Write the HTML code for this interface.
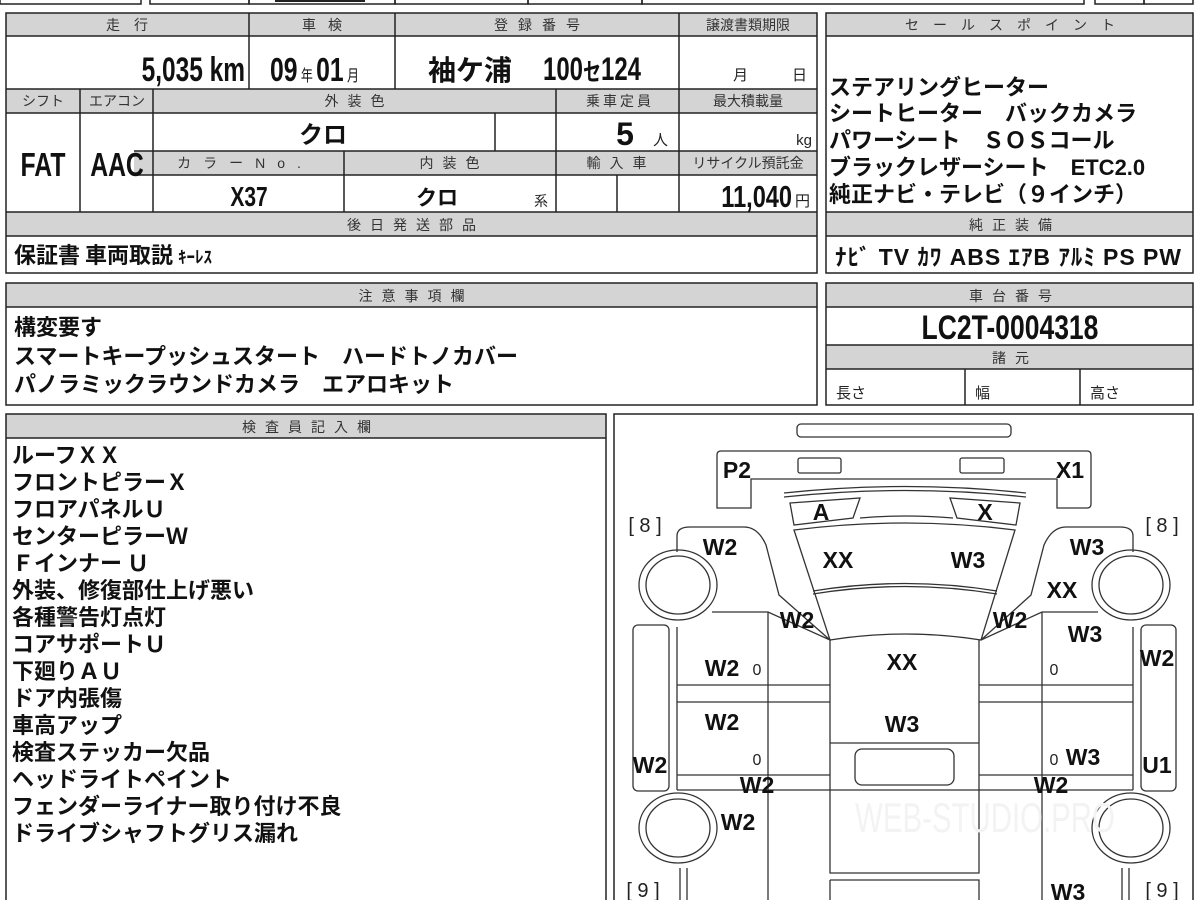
<!DOCTYPE html>
<html><head><meta charset="utf-8"><style>
html,body{margin:0;padding:0;background:#fff;width:1200px;height:900px;overflow:hidden}
svg{display:block}
.h{font-family:"Liberation Sans","Noto Sans CJK JP",sans-serif;font-size:14px;fill:#333;text-anchor:middle;letter-spacing:9px}
.hs{font-family:"Liberation Sans","Noto Sans CJK JP",sans-serif;font-size:14px;fill:#333;text-anchor:middle}
.b{font-family:"Liberation Sans","Noto Sans CJK JP",sans-serif;font-weight:bold;fill:#111}
.j{font-family:"Noto Sans CJK JP",sans-serif;font-weight:bold;fill:#111;font-size:22px}
.d{font-family:"Liberation Sans",sans-serif;font-weight:bold;font-size:23px;fill:#111;text-anchor:middle}
</style></head><body>
<svg width="1200" height="900" viewBox="0 0 1200 900" xmlns="http://www.w3.org/2000/svg">
<g fill="none" stroke="#222" stroke-width="1.5">
<rect x="0" y="-20" width="141" height="24"/><rect x="150" y="-20" width="99" height="24"/><rect x="249" y="-20" width="146" height="24"/><rect x="395" y="-20" width="133" height="24"/><rect x="528" y="-20" width="114" height="24"/><rect x="642" y="-20" width="442" height="24"/><rect x="1095" y="-20" width="49" height="24"/><rect x="1144" y="-20" width="49" height="24"/>
</g>
<rect x="275" y="0" width="90" height="2" fill="#222"/>
<g fill="#d4d4d4">
<rect x="6" y="13" width="811" height="23"/><rect x="6" y="89" width="811" height="24"/><rect x="134" y="151" width="683" height="24"/><rect x="6" y="212" width="811" height="24"/>
<rect x="826" y="13" width="367" height="23"/><rect x="826" y="212" width="367" height="24"/>
<rect x="6" y="283" width="811" height="24"/><rect x="826" y="283" width="367" height="24"/><rect x="826" y="345" width="367" height="24"/>
<rect x="6" y="414" width="600" height="24"/>
</g>
<g fill="none" stroke="#222" stroke-width="1.5">
<rect x="6" y="13" width="811" height="260"/>
<path d="M6 36H817M6 89H817M6 113H817M134 151H817M134 175H817M6 212H817M6 236H817"/>
<path d="M249 13V89M395 13V89M679 13V212M80 89V212M153 89V212M556 89V212M495 113V151M344 151V212M617 175V212"/>
<rect x="826" y="13" width="367" height="260"/>
<path d="M826 36H1193M826 212H1193M826 236H1193"/>
<rect x="6" y="283" width="811" height="122"/><path d="M6 307H817"/>
<rect x="826" y="283" width="367" height="122"/><path d="M826 307H1193M826 345H1193M826 369H1193M965 369V405M1080 369V405"/>
<rect x="6" y="414" width="600" height="500"/><path d="M6 438H606"/>
<rect x="614" y="414" width="579" height="500"/>
</g>
<!-- headers -->
<text class="h" x="134" y="30" style="letter-spacing:14px">走行</text><text class="h" x="328" y="30" style="letter-spacing:12px">車検</text><text class="h" x="542" y="30" style="letter-spacing:10px">登録番号</text><text class="hs" x="748" y="30">譲渡書類期限</text>
<text class="hs" x="43" y="106">シフト</text><text class="hs" x="117" y="106">エアコン</text><text class="h" x="359" y="106">外装色</text><text class="h" x="620" y="106" style="letter-spacing:3px">乗車定員</text><text class="hs" x="748" y="106">最大積載量</text>
<text class="h" x="245" y="168" style="letter-spacing:12px">カラーNo.</text><text class="h" x="454" y="168">内装色</text><text class="h" x="621" y="168">輸入車</text><text class="hs" x="748" y="168">リサイクル預託金</text>
<text class="h" x="416" y="230">後日発送部品</text>
<text class="h" x="1017" y="30" style="letter-spacing:14px">セールスポイント</text><text class="h" x="1015" y="230">純正装備</text>
<text class="h" x="416" y="301">注意事項欄</text><text class="h" x="1015" y="301">車台番号</text><text class="h" x="1015" y="363">諸元</text>
<text class="h" x="311" y="432">検査員記入欄</text>
<!-- values -->
<text class="b" x="245" y="81" font-size="34" text-anchor="end" transform="translate(245 0) scale(0.72 1) translate(-245 0)">5,035 km</text>
<text class="b" x="270" y="81" font-size="33" transform="translate(270 0) scale(0.75 1) translate(-270 0)">09<tspan font-size="16" font-weight="normal"> 年 </tspan>01<tspan font-size="16" font-weight="normal"> 月</tspan></text>
<text class="b" x="428" y="80" font-size="28" font-family="Noto Sans CJK JP">袖ケ浦</text>
<text class="b" x="543" y="80" font-size="32" transform="translate(543 0) scale(0.75 1) translate(-543 0)">100<tspan font-size="24" font-family="Noto Sans CJK JP">セ</tspan>124</text>
<text x="733" y="80" font-size="15" fill="#222" font-family="Noto Sans CJK JP">月</text><text x="792" y="80" font-size="15" fill="#222" font-family="Noto Sans CJK JP">日</text>
<text class="b" x="43" y="176" font-size="33" text-anchor="middle" transform="translate(43 0) scale(0.75 1) translate(-43 0)">FAT</text>
<text class="b" x="117" y="176" font-size="33" text-anchor="middle" transform="translate(117 0) scale(0.75 1) translate(-117 0)">AAC</text>
<text class="b" x="323" y="143" font-size="24" text-anchor="middle" font-family="Noto Sans CJK JP">クロ</text>
<text class="b" x="625" y="145" font-size="32" text-anchor="middle">5</text><text x="653" y="145" font-size="15" fill="#222" font-family="Noto Sans CJK JP">人</text>
<text x="812" y="145" font-size="15" fill="#222" text-anchor="end" font-family="Liberation Sans">kg</text>
<text class="b" x="249" y="206" font-size="28" text-anchor="middle" transform="translate(249 0) scale(0.75 1) translate(-249 0)">X37</text>
<text class="b" x="437" y="205" font-size="21" text-anchor="middle" font-family="Noto Sans CJK JP">クロ</text><text x="534" y="206" font-size="14" fill="#222" font-family="Noto Sans CJK JP">系</text>
<text class="b" x="792" y="207" font-size="31" text-anchor="end" transform="translate(792 0) scale(0.76 1) translate(-792 0)">11,040</text><text x="795" y="206" font-size="15" fill="#222" font-family="Noto Sans CJK JP">円</text>
<text class="j" x="14" y="263">保証書 車両取説 <tspan font-size="17">ｷｰﾚｽ</tspan></text>
<g class="j" font-size="21">
<text x="829" y="95">ステアリングヒーター</text>
<text x="829" y="121">シートヒーター　バックカメラ</text>
<text x="829" y="148">パワーシート　ＳＯＳコール</text>
<text x="829" y="175">ブラックレザーシート　<tspan font-family="Liberation Sans" font-size="22" transform="scale(0.8 1)">ETC2.0</tspan></text>
<text x="829" y="202">純正ナビ・テレビ（９インチ）</text>
</g>
<text class="b" x="835" y="265" font-size="23" textLength="346" font-family="Liberation Sans,Noto Sans CJK JP,sans-serif">ﾅﾋﾞ  TV  ｶﾜ  ABS  ｴｱB  ｱﾙﾐ  PS  PW</text>
<g class="j" font-size="23">
<text x="14" y="335">構変要す</text>
<text x="14" y="364">スマートキープッシュスタート　ハードトノカバー</text>
<text x="14" y="392">パノラミックラウンドカメラ　エアロキット</text>
</g>
<text class="b" x="1010" y="339" font-size="34" text-anchor="middle" transform="translate(1010 0) scale(0.78 1) translate(-1010 0)">LC2T-0004318</text>
<g font-size="15" fill="#222" font-family="Noto Sans CJK JP"><text x="836" y="398">長さ</text><text x="975" y="398">幅</text><text x="1090" y="398">高さ</text></g>
<g class="j" font-size="22">
<text x="12" y="463">ルーフＸＸ</text><text x="12" y="490">フロントピラーＸ</text><text x="12" y="517">フロアパネルＵ</text><text x="12" y="544">センターピラーＷ</text><text x="12" y="571">Ｆインナー Ｕ</text><text x="12" y="598">外装、修復部仕上げ悪い</text><text x="12" y="625">各種警告灯点灯</text><text x="12" y="652">コアサポートＵ</text><text x="12" y="679">下廻りＡＵ</text><text x="12" y="706">ドア内張傷</text><text x="12" y="733">車高アップ</text><text x="12" y="760">検査ステッカー欠品</text><text x="12" y="787">ヘッドライトペイント</text><text x="12" y="814">フェンダーライナー取り付け不良</text><text x="12" y="841">ドライブシャフトグリス漏れ</text>
</g>
<!-- diagram -->
<g fill="none" stroke="#333" stroke-width="1.3">
<rect x="797" y="424" width="214" height="13" rx="4"/>
<path d="M717 508V455Q717 451 721 451H1087Q1091 451 1091 455V504Q1091 508 1087 508H1057V479H751V508Z"/>
<rect x="798" y="458" width="43" height="15" rx="2"/><rect x="960" y="458" width="44" height="15" rx="2"/>
<path d="M784 493Q905 480 1026 493M784 497Q905 484 1026 497"/>
<path d="M790 503L860 498L853 518L794 525Z"/><path d="M1020 503L950 498L957 518L1016 525Z"/>
<path d="M860 518Q905 514 953 518"/>
<path d="M794 530Q905 516 1015 530L981 640Q905 628 830 640Z"/>
<path d="M813 591Q905 576 997 591M813 594Q905 579 997 594"/>
<path d="M677 552V536Q677 527 690 527H744Q758 527 766 545L779 595L830 640"/>
<path d="M1133 552V536Q1133 527 1120 527H1066Q1052 527 1044 545L1031 595L981 640"/>
<path d="M712 612H768L830 640M1098 612H1042L981 640"/>
<ellipse cx="678" cy="585" rx="39" ry="35"/><ellipse cx="678" cy="585" rx="32" ry="29"/>
<ellipse cx="1131" cy="585" rx="39" ry="35"/><ellipse cx="1131" cy="585" rx="32" ry="29"/>
<ellipse cx="678" cy="828" rx="39" ry="35"/><ellipse cx="678" cy="828" rx="32" ry="29"/>
<ellipse cx="1131" cy="828" rx="39" ry="35"/><ellipse cx="1131" cy="828" rx="32" ry="29"/>
<path d="M677 627V790M1133 627V790M768 612V900M1042 612V900"/>
<rect x="633" y="625" width="36" height="166" rx="5"/><rect x="1141" y="625" width="35" height="166" rx="5"/>
<path d="M830 640V873H979V640M830 743H979M830 880V900M830 880H979V900"/>
<rect x="855" y="749" width="99" height="36" rx="7"/>
<path d="M677 685H830M677 702H830M979 685H1133M979 702H1133M677 775H830M979 775H1133M677 790H1133"/>
<path d="M680 868V900M687 868V900M1122 868V900M1129 868V900"/>
</g>
<text x="985" y="832" font-family="Liberation Sans" font-size="42" fill="#f3f3f3" text-anchor="middle" transform="translate(985 0) scale(0.7 1) translate(-985 0)">WEB-STUDIO.PRO</text>
<g class="d">
<text x="737" y="478">P2</text><text x="1070" y="478">X1</text><text x="821" y="520">A</text><text x="985" y="520">X</text>
<text x="720" y="555">W2</text><text x="838" y="568">XX</text><text x="968" y="568">W3</text><text x="1087" y="555">W3</text><text x="1062" y="598">XX</text>
<text x="797" y="628">W2</text><text x="1010" y="628">W2</text><text x="1085" y="642">W3</text><text x="902" y="670">XX</text>
<text x="722" y="676">W2</text><text x="1157" y="666">W2</text><text x="722" y="730">W2</text><text x="902" y="732">W3</text>
<text x="650" y="773">W2</text><text x="1083" y="765">W3</text><text x="1157" y="773">U1</text><text x="757" y="793">W2</text><text x="1051" y="793">W2</text>
<text x="738" y="830">W2</text><text x="1068" y="900">W3</text>
</g>
<g font-family="Liberation Sans" font-size="20" fill="#222" text-anchor="middle">
<text x="645" y="532">[ 8 ]</text><text x="1162" y="532">[ 8 ]</text><text x="643" y="897">[ 9 ]</text><text x="1162" y="897">[ 9 ]</text>
<text x="757" y="675" font-size="16">0</text><text x="1054" y="675" font-size="16">0</text><text x="757" y="765" font-size="16">0</text><text x="1054" y="765" font-size="16">0</text>
</g>
</svg>
</body></html>
